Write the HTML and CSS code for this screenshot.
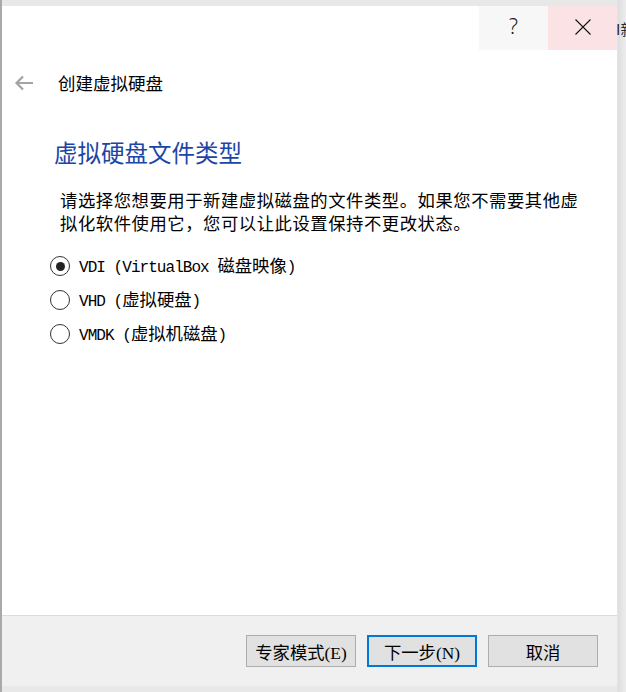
FILE: index.html
```html
<!DOCTYPE html>
<html lang="zh-CN">
<head>
<meta charset="utf-8">
<title>创建虚拟硬盘</title>
<link rel="stylesheet" href="styles.css">
</head>
<body>
<span class="behind">I新</span>
<div class="window">
  <div class="titlebar">
    <div class="tb-btn help">?</div>
    <div class="tb-btn close">
      <svg width="16" height="16" viewBox="0 0 16 16"><path d="M0.5 0.5 L15.5 15.5 M15.5 0.5 L0.5 15.5" stroke="#111" stroke-width="1.1" fill="none"/></svg>
    </div>
  </div>
  <div class="header">
    <svg class="back" width="20" height="16" viewBox="0 0 20 16"><path d="M19 8 H2.5 M9 1.5 L2.5 8 L9 14.5" stroke="#a3a3a3" stroke-width="2.2" fill="none"/></svg>
    <span class="title">创建虚拟硬盘</span>
  </div>
  <h1 class="heading">虚拟硬盘文件类型</h1>
  <p class="desc">请选择您想要用于新建虚拟磁盘的文件类型。如果您不需要其他虚拟化软件使用它，您可以让此设置保持不更改状态。</p>
  <div class="options">
    <div class="opt"><span class="radio checked"></span><span class="label"><span class="lat">VDI (VirtualBox </span>磁盘映像<span class="lat">)</span></span></div>
    <div class="opt"><span class="radio"></span><span class="label"><span class="lat">VHD (</span>虚拟硬盘<span class="lat">)</span></span></div>
    <div class="opt"><span class="radio"></span><span class="label"><span class="lat">VMDK (</span>虚拟机磁盘<span class="lat">)</span></span></div>
  </div>
  <div class="footer">
    <button class="btn">专家模式(E)</button>
    <button class="btn primary">下一步(N)</button>
    <button class="btn">取消</button>
  </div>
</div>
</body>
</html>
```
FILE: styles.css
```css
html, body {
  margin: 0;
  padding: 0;
}
body {
  width: 626px;
  height: 692px;
  overflow: hidden;
  position: relative;
  background:
    linear-gradient(to right, #a9a9a9 0, #a9a9a9 2px, transparent 2px),
    linear-gradient(to right, #e8e8e8 0, #e8e8e8 617px, #dedede 618px, #ededed 626px);
  font-family: "Liberation Serif", "Noto Sans CJK SC", serif;
}
.behind {
  position: absolute;
  left: 616px;
  top: 20px;
  width: 10px;
  overflow: hidden;
  white-space: nowrap;
  font-family: "Noto Sans CJK SC", sans-serif;
  font-size: 15px;
  line-height: 18px;
  color: #2a2a2a;
}
.window {
  margin: 6px 0 0 2px;
  width: 615px;
  height: 680px;
  background: #fff;
  display: flex;
  flex-direction: column;
}
.titlebar {
  height: 44px;
  display: flex;
  justify-content: flex-end;
}
.tb-btn {
  width: 69px;
  height: 44px;
  display: flex;
  align-items: center;
  justify-content: center;
}
.help {
  background: #f7f7f7;
  font-family: "Noto Sans", sans-serif;
  font-weight: 300;
  font-size: 21px;
  color: #1a1a1a;
  padding-bottom: 4px;
  box-sizing: border-box;
}
.close {
  background: #fbe3e5;
  padding-bottom: 2px;
  box-sizing: border-box;
}
.header {
  margin-top: 21px;
  height: 24px;
  display: flex;
  align-items: center;
}
.back {
  margin-left: 12px;
}
.title {
  margin-left: 24px;
  font-family: "Noto Sans CJK SC", sans-serif;
  font-size: 17.5px;
  line-height: 24px;
  color: #000;
}
.heading {
  margin: 41px 0 0 52px;
  font-family: "Noto Sans CJK SC", sans-serif;
  font-weight: 400;
  font-size: 23.5px;
  line-height: 32px;
  color: #1b46a8;
}
.desc {
  margin: 22px 0 0 58px;
  width: 528px;
  font-family: "Liberation Serif", "Noto Sans CJK SC", serif;
  font-size: 17.33px;
  letter-spacing: 0.55px;
  line-height: 23px;
  color: #000;
}
.options {
  margin: 13px 0 0 48px;
  display: flex;
  flex-direction: column;
}
.opt {
  height: 34px;
  display: flex;
  align-items: center;
}
.radio {
  width: 18px;
  height: 18px;
  border: 1.2px solid #333;
  border-radius: 50%;
  display: flex;
  align-items: center;
  justify-content: center;
  flex: none;
}
.radio.checked::after {
  content: "";
  width: 9px;
  height: 9px;
  border-radius: 50%;
  background: #222;
}
.label {
  margin-left: 9px;
  font-family: "Noto Sans CJK SC", sans-serif;
  font-size: 17.33px;
  line-height: 24px;
  color: #000;
  white-space: pre;
}
.lat {
  font-family: "Liberation Mono", monospace;
  font-size: 16px;
  letter-spacing: -0.95px;
}
.footer {
  margin-top: auto;
  height: 71px;
  border-top: 1px solid #dcdcdc;
  background: #f0f0f0;
  display: flex;
  justify-content: flex-end;
  align-items: flex-start;
  gap: 11px;
  padding: 19px 19px 0 0;
  box-sizing: border-box;
}
.btn {
  width: 110px;
  height: 32px;
  margin: 0;
  padding: 0;
  background: #e1e1e1;
  border: 1px solid #adadad;
  font-family: "Liberation Serif", "Noto Sans CJK SC", serif;
  font-size: 17.33px;
  color: #000;
  box-sizing: border-box;
}
.btn.primary {
  border: 2px solid #0078d7;
}
```
